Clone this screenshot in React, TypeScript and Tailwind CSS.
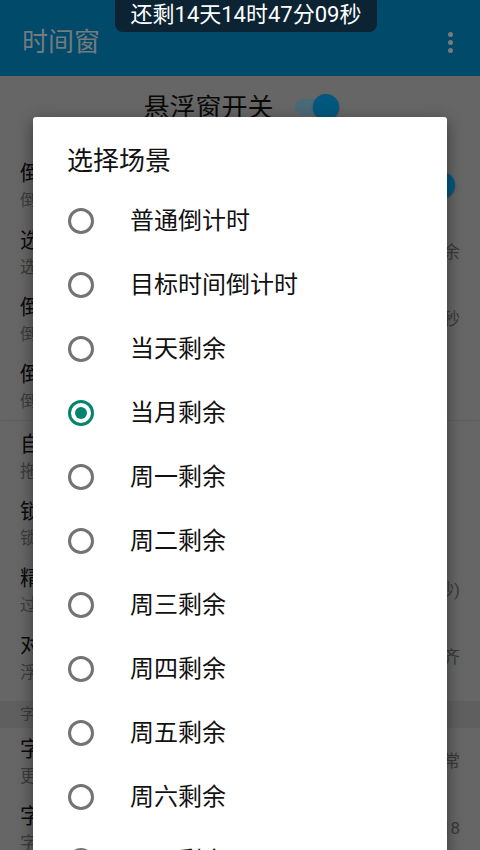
import React from "react";

const FONT = { fontFamily: 'Roboto, "Noto Sans CJK SC", sans-serif' };

type Row = { title: string; sub: string; value?: string; toggle?: boolean };

const group1: Row[] = [
  { title: "倒计时显示", sub: "倒计时结束后自动隐藏", toggle: true },
  { title: "选择场景", sub: "选择倒计时场景", value: "当月剩余" },
  { title: "倒计时精度", sub: "倒计时显示到秒", value: "精确到秒" },
  { title: "倒计时格式", sub: "倒计时显示格式" },
];
const group2: Row[] = [
  { title: "自动隐藏", sub: "拖动调整悬浮窗位置" },
  { title: "锁定位置", sub: "锁定悬浮窗位置" },
  { title: "精确度", sub: "过段时间刷新一次", value: "1(秒)" },
  { title: "对齐方式", sub: "浮窗文字对齐方式", value: "居中对齐" },
];
const group3: Row[] = [
  { title: "字体样式", sub: "更改字体样式", value: "正常" },
  { title: "字体大小", sub: "字体大小设置", value: "18" },
];

function Toggle() {
  return (
    <div className="relative flex items-center w-[44px] h-[28px]">
      <div className="w-[38px] h-[16px] rounded-full bg-[#4a6a78]" />
      <div className="absolute right-0 w-[26px] h-[26px] rounded-full bg-[#00587f] shadow-[0_1px_2px_rgba(0,0,0,0.35)]" />
    </div>
  );
}

function BgRow({ r }: { r: Row }) {
  return (
    <div className="flex items-center h-[67px] pl-[20px] pr-[20px]">
      <div className="flex-1 flex flex-col">
        <div className="text-[21px] leading-[28px] text-[#0a0a0a]">{r.title}</div>
        <div className="text-[17px] leading-[26px] text-[#3c3c3c]">{r.sub}</div>
      </div>
      {r.value && <div className="text-[17px] text-[#3a3a3a]">{r.value}</div>}
      {r.toggle && (
        <div className="mr-[5px] mt-[-2px]">
          <Toggle />
        </div>
      )}
    </div>
  );
}

const options = [
  "普通倒计时",
  "目标时间倒计时",
  "当天剩余",
  "当月剩余",
  "周一剩余",
  "周二剩余",
  "周三剩余",
  "周四剩余",
  "周五剩余",
  "周六剩余",
  "周日剩余",
];

export default function App() {
  return (
    <div className="relative w-[480px] h-[850px] overflow-hidden bg-[#666666]" style={FONT}>
      {/* App bar */}
      <div className="h-[76px] bg-[#024a6a] flex items-center pl-[22px] pr-[27px]">
        <div className="flex-1 text-[26px] text-[#737b80] pt-[8px]">时间窗</div>
        <div className="flex flex-col gap-[3px] pt-[8px]">
          <div className="w-[5px] h-[5px] rounded-full bg-[#7a7a7a]" />
          <div className="w-[5px] h-[5px] rounded-full bg-[#7a7a7a]" />
          <div className="w-[5px] h-[5px] rounded-full bg-[#7a7a7a]" />
        </div>
      </div>

      {/* Switch row */}
      <div className="h-[76px] flex justify-center items-start pt-[15px] gap-[21px] pl-[2px]">
        <div className="text-[26px] leading-[34px] text-[#0a0a0a]">悬浮窗开关</div>
        <div className="pt-[2px]">
          <Toggle />
        </div>
      </div>

      {group1.map((r) => (
        <BgRow key={r.title} r={r} />
      ))}
      <div className="h-px bg-[#5c5c5c]" />
      <div className="pt-[2px]">
        {group2.map((r) => (
          <BgRow key={r.title} r={r} />
        ))}
      </div>
      <div className="h-[10px]" />
      <div className="h-[27px] bg-[#5f5f5f] flex items-center pl-[20px] text-[15px] text-[#3c3c3c]">
        字体设置
      </div>
      {group3.map((r) => (
        <BgRow key={r.title} r={r} />
      ))}

      {/* Floating countdown pill */}
      <div className="absolute left-[115px] top-[-6px] w-[262px] h-[38px] rounded-[8px] bg-[#0b2333] flex items-end justify-center pb-[4px]">
        <span className="text-[22px] leading-[26px] text-white">还剩14天14时47分09秒</span>
      </div>

      {/* Dialog */}
      <div className="absolute left-[33px] top-[117px] w-[414px] h-[800px] bg-white rounded-[3px] shadow-[0_4px_16px_rgba(0,0,0,0.45)]">
        <div className="pt-[28px] pl-[34px] text-[26px] leading-[32px] text-[#111111]">选择场景</div>
        <div className="mt-[12px] flex flex-col">
          {options.map((o) => {
            const sel = o === "当月剩余";
            return (
              <div key={o} className="h-[64px] flex items-center pl-[35px]">
                {sel ? (
                  <div className="w-[26px] h-[26px] rounded-full border-[3px] border-[#05836f] flex items-center justify-center">
                    <div className="w-[12px] h-[12px] rounded-full bg-[#05836f]" />
                  </div>
                ) : (
                  <div className="w-[26px] h-[26px] rounded-full border-[3px] border-[#737373]" />
                )}
                <div className="ml-[36px] text-[24px] leading-[30px] text-[#111111]">{o}</div>
              </div>
            );
          })}
        </div>
      </div>
    </div>
  );
}
